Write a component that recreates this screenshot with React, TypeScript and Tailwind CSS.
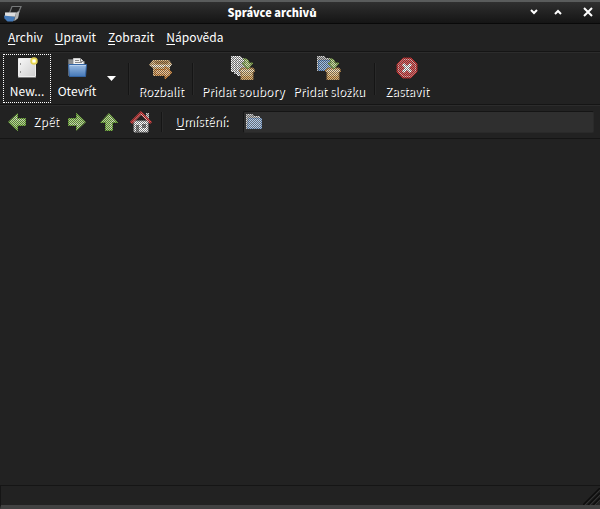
import type { ReactNode } from "react";

const menus = ["Archiv", "Upravit", "Zobrazit", "Nápověda"];

const disabledText = "text-[#222222]/80 [text-shadow:1px_1px_0_#ffffff]";

function Dither() {
  return (
    <svg className="absolute h-0 w-0" aria-hidden="true">
      <defs>
        <pattern id="dots" width="2" height="2" patternUnits="userSpaceOnUse">
          <g fill="#fff" shapeRendering="crispEdges">
            <rect width="1" height="1" />
            <rect x="1" y="1" width="1" height="1" />
          </g>
        </pattern>
        <mask id="dither" maskUnits="userSpaceOnUse" x="0" y="0" width="24" height="24">
          <rect width="24" height="24" fill="#fff" fillOpacity="0.4" />
          <rect width="24" height="24" fill="url(#dots)" />
        </mask>
        <linearGradient id="paper" x1="0" y1="0" x2="1" y2="1">
          <stop offset="0" stopColor="#f8f8f8" />
          <stop offset="1" stopColor="#cfcfcf" />
        </linearGradient>
        <linearGradient id="folder" x1="0" y1="0" x2="0" y2="1">
          <stop offset="0" stopColor="#9dbde3" />
          <stop offset="1" stopColor="#4478b8" />
        </linearGradient>
      </defs>
    </svg>
  );
}

function Icon({ size = 24, off, children }: { size?: number; off?: boolean; children: ReactNode }) {
  return (
    <svg
      className="block shrink-0"
      width={size}
      height={size}
      viewBox={`0 0 ${size} ${size}`}
      aria-hidden="true"
    >
      <g mask={off ? "url(#dither)" : undefined}>{children}</g>
    </svg>
  );
}

function AppIcon() {
  return (
    <Icon size={18}>
      <path d="M5.5 9 8 2.5h9L13.5 11" fill="#222" stroke="#77797a" strokeWidth="1.2" />
      <path d="M1.5 8.5h10l4-2-1.5 8-4 2.5H3L.5 13z" fill="#666b70" />
      <path d="M1 8.5h11l-1 4H1z" fill="#dddddd" />
      <path d="M0 11.5 11 13l-2 4.5H3.5L.5 14.5z" fill="#4379b8" />
      <path d="m12 9 3.5-2-1.5 7-3.5 3z" fill="#b4b5b4" />
    </Icon>
  );
}

function NewIcon() {
  return (
    <Icon>
      <path d="M3.5 2.5h17v18h-17z" fill="url(#paper)" stroke="#ededed" />
      <path d="M3 21.5h18" stroke="#777" />
      <path d="M5.5 7v2M5.5 15v2" stroke="#999" />
      <circle cx="19" cy="5" r="3" fill="#fff9a0" stroke="#e0cf52" strokeWidth="1.5" />
      <circle cx="19" cy="5" r="1.3" fill="#fff" />
    </Icon>
  );
}

function OpenIcon() {
  return (
    <Icon>
      <path d="M3.5 3.5h5l1 2h10v14h-16z" fill="#8a8c8e" stroke="#67696b" />
      <path d="M8.5 2.5h7l3 3v7h-10z" fill="#f2f2f2" stroke="#ccc" />
      <path d="M10 4.5h4M10 6.5h7M15.5 2v3.5h3" stroke="#888" fill="none" />
      <path d="M3.5 8.5h18l-1 12h-16z" fill="url(#folder)" stroke="#3465a4" />
      <path d="M5 9.5h16" stroke="#b8d0ec" />
    </Icon>
  );
}

function ExtractIcon() {
  return (
    <Icon off>
      <path d="M4 4h16l3 4-2 2v10H4v-8L0 9z" fill="#eac48c" />
      <path d="m5 5 2 3h11l2-3z" fill="#c0935a" />
      <path d="M1 9h18l4-1-2 3H4z" fill="#fff0d6" />
      <path d="M6 13.5h10v-3l7 6-7 6.5v-4H6z" fill="#f9c48a" stroke="#dd8a38" />
    </Icon>
  );
}

function Box() {
  return (
    <>
      <path d="M11 12h11l2 3-2 1v8H10v-8l-2-1z" fill="#f0cf98" stroke="#bd8a4a" />
      <path d="M9 15h14" stroke="#fff2d8" />
      <path d="M11 20h10v3H11z" fill="#ecb76e" />
      <path d="M12 3q6-1 6 4h4l-5 6-6-6h3q0-3-2-4z" fill="#d0e8a0" stroke="#80aa48" />
    </>
  );
}

function AddFilesIcon() {
  return (
    <Icon off>
      <path d="M.5.5h9l3 3v12H.5z" fill="#ddd" stroke="#fff" />
      <path d="M3.5 2.5h9l3 3v12h-12z" fill="#d6d6d6" stroke="#fff" />
      <path d="M6.5 4.5h9l3 3v12h-12z" fill="#ddd" stroke="#fff" />
      <Box />
    </Icon>
  );
}

function AddFolderIcon() {
  return (
    <Icon off>
      <path d="M.5.5h7l1 2h5v12H.5z" fill="#bbb" stroke="#ddd" />
      <path d="M1.5 4.5h13v10h-13z" fill="#9bbfe9" stroke="#6f9bd3" />
      <Box />
    </Icon>
  );
}

function StopIcon() {
  return (
    <Icon off>
      <path d="M8 2h8l6 6v8l-6 6H8l-6-6V8z" fill="#e85c5c" stroke="#d03030" />
      <path d="M8.5 3.5h7l5 5v7l-5 5h-7l-5-5v-7z" fill="none" stroke="#f29a9a" />
      <path d="m8 8 8 8M16 8l-8 8" stroke="#fff" strokeWidth="3" />
    </Icon>
  );
}

function Arrow({ turn }: { turn: string }) {
  return (
    <Icon off>
      <path
        transform={turn}
        d="M3.5 12 12.5 3.5V8.5h8v7h-8v5z"
        fill="#b4e384"
        stroke="#7dbb46"
      />
      <path transform={turn} d="M6 12 11.5 7v3H19" fill="none" stroke="#d9f2be" />
    </Icon>
  );
}

function HomeIcon() {
  return (
    <Icon off>
      <path d="M5 11h14v11H5z" fill="#ffffff" stroke="#ccc" />
      <path d="M7 15h3v7H7zM13 14h4v4h-4z" fill="#8a8a8a" />
      <path d="M17 3h3v6h-3z" fill="#ccc" />
      <path d="m2 13 10-10 10 10" fill="none" stroke="#ee4848" strokeWidth="3" />
      <path d="m4 12 8-8 8 8" fill="none" stroke="#f7a8a8" />
    </Icon>
  );
}

function FolderIcon() {
  return (
    <Icon size={16} off>
      <path d="M.5.5h6l1 2h6v12H.5z" fill="#bbb" stroke="#ddd" />
      <path d="M2.5 4.5h13v10h-14z" fill="#b4cdec" stroke="#8db0dc" />
    </Icon>
  );
}

// the CJK face has no ř or ž of its own, so those come from Noto Sans
function Czech({ text }: { text: string }) {
  return text.split(/([řž])/).map((part, i) =>
    i % 2 ? (
      <span key={i} className="font-['Noto_Sans',sans-serif] text-[11px] leading-none">
        {part}
      </span>
    ) : (
      part
    ),
  );
}

function Mnemonic({ text }: { text: string }) {
  return (
    <span>
      <span className="underline underline-offset-2">{text[0]}</span>
      {text.slice(1)}
    </span>
  );
}

type ToolProps = { label: string; disabled?: boolean; frame: string; children: ReactNode };

function Tool({ label, disabled, frame, children }: ToolProps) {
  return (
    <button
      type="button"
      disabled={disabled}
      className={`flex h-[49px] shrink-0 flex-col items-center border pt-px whitespace-nowrap ${frame}`}
    >
      {children}
      <span className={`leading-[22px] ${disabled ? disabledText : ""}`}>
        <Czech text={label} />
      </span>
    </button>
  );
}

function Separator({ tall }: { tall?: boolean }) {
  return (
    <span
      className={`mx-1 w-0.5 shrink-0 border-l border-[#151515] bg-[#292929] ${tall ? "h-8" : "h-5"}`}
    />
  );
}

export default function App() {
  return (
    <div className="flex min-h-screen flex-col bg-[#222222] font-['Noto_Sans_CJK_SC','Noto_Sans',sans-serif] text-[12px] text-white">
      <Dither />
      <header className="flex h-6 items-center border-t-2 border-b border-t-[#5a5c5c] border-b-[#090909] bg-linear-to-b from-[#303030] to-[#151515] pl-1">
        <AppIcon />
        <h1 className="flex-1 pb-0.5 text-center text-[11px] leading-5 font-black">
          Správce archivů
        </h1>
        <div className="flex items-center pb-0.5">
          <button type="button" aria-label="Minimalizovat" className="flex w-6 justify-center">
            <svg width="8" height="8" viewBox="0 0 8 8" aria-hidden="true">
              <path d="m1 2 3 3 3-3" fill="none" stroke="#fff" strokeWidth="2" />
            </svg>
          </button>
          <button type="button" aria-label="Maximalizovat" className="flex w-6 justify-center">
            <svg width="8" height="8" viewBox="0 0 8 8" aria-hidden="true">
              <path d="m1 6 3-3 3 3" fill="none" stroke="#fff" strokeWidth="2" />
            </svg>
          </button>
          <button type="button" aria-label="Zavřít" className="ml-1.5 flex w-6 justify-center">
            <svg width="10" height="10" viewBox="0 0 10 10" aria-hidden="true">
              <path d="m1 1 8 8M9 1 1 9" stroke="#fff" strokeWidth="2" />
            </svg>
          </button>
        </div>
      </header>

      <nav className="flex h-7 items-center gap-3 border-b border-[#151515] px-2 pb-0.5">
        {menus.map((name) => (
          <button type="button" key={name}>
            <Mnemonic text={name} />
          </button>
        ))}
      </nav>

      <div className="flex h-[53px] items-center border-t border-b border-t-[#2c2c2c] border-b-[#151515] px-[3px]">
        <Tool label="New..." frame="w-12 border-dotted border-white">
          <NewIcon />
        </Tool>
        <Tool label="Otevřít" frame="w-[52px] border-transparent">
          <OpenIcon />
        </Tool>
        <button type="button" aria-label="Otevřít nedávné" className="pr-2 pl-1">
          <svg width="9" height="5" viewBox="0 0 9 5" aria-hidden="true">
            <path d="M0 0h9L4.5 5z" fill="#fff" />
          </svg>
        </button>
        <Separator tall />
        <Tool label="Rozbalit" disabled frame="w-[54px] border-transparent">
          <ExtractIcon />
        </Tool>
        <Separator tall />
        <Tool label="Přidat soubory" disabled frame="w-[90px] border-transparent">
          <AddFilesIcon />
        </Tool>
        <Tool label="Přidat složku" disabled frame="w-[82px] border-transparent">
          <AddFolderIcon />
        </Tool>
        <Separator tall />
        <Tool label="Zastavit" disabled frame="w-[54px] border-transparent">
          <StopIcon />
        </Tool>
      </div>

      <div className="flex h-[34px] items-center border-t border-b border-t-[#2c2c2c] border-b-[#151515] pr-1.5 pl-[5px]">
        <button type="button" disabled className="flex w-[52px] shrink-0 items-center gap-1">
          <Arrow turn="rotate(0)" />
          <span className={`pb-0.5 ${disabledText}`}>Zpět</span>
        </button>
        <button type="button" disabled aria-label="Vpřed" className="ml-2">
          <Arrow turn="rotate(180 12 12)" />
        </button>
        <button type="button" disabled aria-label="Nahoru" className="ml-2">
          <Arrow turn="rotate(90 12 12)" />
        </button>
        <button type="button" disabled aria-label="Domů" className="mr-1 ml-2">
          <HomeIcon />
        </button>
        <Separator />
        <label
          htmlFor="location"
          className={`mr-4 ml-2 w-[52px] shrink-0 pb-0.5 whitespace-nowrap ${disabledText}`}
        >
          <Mnemonic text="Umístění:" />
        </label>
        <div className="flex h-[22px] min-w-0 flex-1 items-center rounded-xs border border-t-[#151515] border-r-[#2a2a2a] border-b-[#2a2a2a] border-l-[#151515] bg-[#2f2f2f] px-0.5">
          <FolderIcon />
          <input id="location" type="text" disabled className="ml-1 min-w-0 flex-1 bg-transparent" />
        </div>
      </div>

      <main className="flex-1" />

      <footer className="flex h-6 items-end justify-end border-b-4 border-t border-l border-t-[#151515] border-b-[#424242] border-l-[#151515]">
        <svg width="17" height="17" viewBox="0 0 17 17" aria-hidden="true">
          <path d="M0 17 17 0M5 17 17 5M10 17l7-7" stroke="#0d0d0d" strokeWidth="1.5" />
          <path d="M2 17 17 2M7 17 17 7M12 17l5-5" stroke="#333" />
        </svg>
      </footer>
    </div>
  );
}
